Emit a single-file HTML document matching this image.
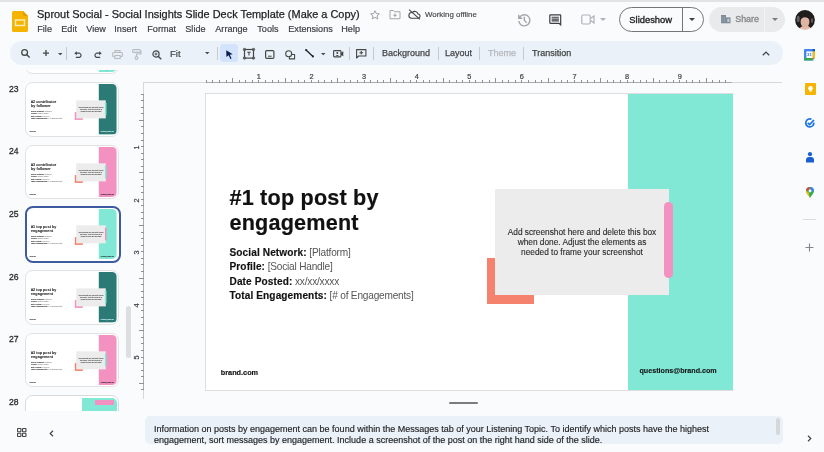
<!DOCTYPE html>
<html><head><meta charset="utf-8">
<style>
*{margin:0;padding:0;box-sizing:border-box}
html,body{width:824px;height:452px;overflow:hidden;background:#f9fbfd;font-family:"Liberation Sans",sans-serif;position:relative}
.a{position:absolute}
.t{position:absolute;white-space:nowrap;line-height:1}
svg{position:absolute;overflow:visible}
</style></head><body><div id="root" style="position:absolute;left:0;top:0;width:824px;height:452px;will-change:transform">
<!-- top strip -->
<div class="a" style="left:0;top:0;width:824px;height:2px;background:#e2e3e5"></div>

<!-- slides logo -->
<svg style="left:12px;top:11px" width="16" height="21" viewBox="0 0 16 21">
  <path d="M1.5 0H11L16 5V19.5A1.5 1.5 0 0 1 14.5 21H1.5A1.5 1.5 0 0 1 0 19.5V1.5A1.5 1.5 0 0 1 1.5 0Z" fill="#f4b400"/>
  <path d="M11 0L16 5H12A1 1 0 0 1 11 4Z" fill="#e39e00"/>
  <rect x="3.5" y="9" width="9" height="5.5" fill="none" stroke="#fdf0c0" stroke-width="1.4"/>
</svg>

<div class="t" style="left:37px;top:9.1px;font-size:10.95px;color:#1f1f1f;-webkit-text-stroke:0.25px #1f1f1f">Sprout Social - Social Insights Slide Deck Template (Make a Copy)</div>

<div id="menu" class="t" style="left:37.3px;top:25.1px;font-size:9.1px;color:#3c3f41;-webkit-text-stroke:0.2px #3c3f41">
<span class="a" style="left:0">File</span><span class="a" style="left:24px">Edit</span><span class="a" style="left:49px">View</span><span class="a" style="left:77px">Insert</span><span class="a" style="left:110px">Format</span><span class="a" style="left:148px">Slide</span><span class="a" style="left:178px">Arrange</span><span class="a" style="left:220px">Tools</span><span class="a" style="left:251px">Extensions</span><span class="a" style="left:304px">Help</span>
</div>

<!-- star, folder, cloud -->
<svg style="left:369px;top:9px" width="12" height="12" viewBox="0 0 24 24"><path d="M12 3.5l2.6 5.6 6.1.6-4.6 4.1 1.3 6-5.4-3.1-5.4 3.1 1.3-6-4.6-4.1 6.1-.6z" fill="none" stroke="#8a8c8e" stroke-width="1.6" stroke-linejoin="round"/></svg>
<svg style="left:389px;top:9px" width="12" height="11" viewBox="0 0 24 22"><path d="M2 3h7l2 2.5h11v14H2z" fill="none" stroke="#9a9c9e" stroke-width="1.8"/><path d="M12 9v7M8.5 12.5h7" stroke="#9a9c9e" stroke-width="1.8"/></svg>
<svg style="left:408px;top:9px" width="13" height="11" viewBox="0 0 24 20"><path d="M6 17h12a4 4 0 0 0 .5-8A6 6 0 0 0 8 6.5 5 5 0 0 0 6 17z" fill="none" stroke="#444" stroke-width="2"/><path d="M2 1l20 18" stroke="#444" stroke-width="2"/></svg>
<div class="t" style="left:425px;top:11px;font-size:7.9px;color:#444746;-webkit-text-stroke:0.15px #444746">Working offline</div>

<!-- history -->
<svg style="left:516px;top:11.5px" width="16.6" height="16.6" viewBox="0 -960 960 960"><path d="M480-120q-138 0-240.5-91.5T122-440h82q14 104 92.5 172T480-200q117 0 198.5-81.5T760-480q0-117-81.5-198.5T480-760q-69 0-129 32t-101 88h110v80H120v-240h80v94q51-64 124.5-99T480-840q75 0 140.5 28.5t114 77q48.5 48.5 77 114T840-480q0 75-28.5 140.5t-77 114q-48.5 48.5-114 77T480-120Zm112-192L440-464v-216h80v184l128 128-56 56Z" fill="#a4a7aa"/></svg>
<!-- comment -->
<svg style="left:547.5px;top:12.7px" width="14.5" height="14.5" viewBox="0 -960 960 960"><path d="M240-400h480v-80H240v80Zm0-120h480v-80H240v80Zm0-120h480v-80H240v80ZM880-80 720-240H160q-33 0-56.5-23.5T80-320v-480q0-33 23.5-56.5T160-880h640q33 0 56.5 23.5T880-800v720ZM160-320h594l46 45v-525H160v480Zm0 0v-480 480Z" fill="#3c4043"/></svg>
<!-- camera -->
<svg style="left:581px;top:14px" width="14" height="11" viewBox="0 0 28 22"><rect x="1.5" y="2" width="17" height="18" rx="3" fill="none" stroke="#b0b3b6" stroke-width="2.4"/><path d="M19 9l7-5v14l-7-5" fill="none" stroke="#b0b3b6" stroke-width="2.4"/></svg>
<svg style="left:600px;top:18px" width="6" height="3" viewBox="0 0 6 3"><path d="M0 0h6L3 3z" fill="#b0b3b6"/></svg>

<!-- slideshow btn -->
<div class="a" style="left:619px;top:7px;width:85px;height:25px;border:1px solid #747775;border-radius:13px"></div>
<div class="a" style="left:682px;top:8px;width:1px;height:23px;background:#747775"></div>
<div class="t" style="left:629.3px;top:14.74px;font-size:9.4px;color:#1f1f1f;-webkit-text-stroke:0.35px #1f1f1f">Slideshow</div>
<svg style="left:689px;top:18px" width="6" height="3" viewBox="0 0 6 3"><path d="M0 0h6L3 3z" fill="#3c4043"/></svg>

<!-- share btn -->
<div class="a" style="left:709px;top:7px;width:76px;height:25px;background:#e9eaeb;border-radius:13px"></div>
<div class="a" style="left:764px;top:7px;width:1px;height:25px;background:#f2f3f4"></div>
<svg style="left:720.5px;top:15px" width="9.5" height="8.3" viewBox="0 0 9.5 8.3"><rect x="0" y="0" width="5" height="8.3" fill="#7d8b98"/><rect x="5" y="2.4" width="4.5" height="5.9" fill="#7d8b98"/><rect x="6.3" y="3.8" width="2" height="3.2" fill="#c5ccd2"/><path d="M1.2 1.5v5.5M3.4 1.5v5.5" stroke="#a5b0ba" stroke-width="0.6"/></svg>
<div class="t" style="left:735.2px;top:14.7px;font-size:8.95px;color:#858789;-webkit-text-stroke:0.3px #858789">Share</div>
<svg style="left:772px;top:18px" width="6" height="3" viewBox="0 0 6 3"><path d="M0 0h6L3 3z" fill="#7a7c7e"/></svg>

<!-- avatar -->
<svg style="left:795.2px;top:9.5px" width="20" height="20" viewBox="0 0 20 20">
<defs><clipPath id="av"><circle cx="10" cy="10" r="9.9"/></clipPath><filter id="avb" x="-10%" y="-10%" width="120%" height="120%"><feGaussianBlur stdDeviation="0.5"/></filter></defs>
<g clip-path="url(#av)"><g filter="url(#avb)">
<rect width="20" height="20" fill="#211d1d"/>
<ellipse cx="3.2" cy="9" rx="1.5" ry="3.2" fill="#5d6166"/>
<ellipse cx="17" cy="10.5" rx="1.2" ry="2.6" fill="#55585b"/>
<path d="M3 22Q4.5 15.5 10.5 15.5Q16 15.5 17.5 22z" fill="#e6bcaa"/>
<ellipse cx="10" cy="11.8" rx="4.4" ry="6" fill="#e0b4a3"/>
<path d="M5.3 9.5Q5.8 4.2 10.8 4.4Q15.2 5 15.1 10Q12.5 6.5 8.2 7.6z" fill="#211d1d"/>
</g></g></svg>

<!-- toolbar pill -->
<div class="a" style="left:9.5px;top:41px;width:773px;height:24.3px;background:#ebf1f9;border-radius:12.2px"></div>

<!-- search -->
<svg style="left:20px;top:48px" width="11" height="11" viewBox="0 0 11 11"><circle cx="4.6" cy="4.4" r="2.85" fill="none" stroke="#444746" stroke-width="1.3"/><path d="M6.6 6.5L9.6 9.5" stroke="#444746" stroke-width="1.4"/></svg>
<!-- plus -->
<svg style="left:42px;top:49px" width="8" height="8" viewBox="0 0 8 8"><path d="M4 1.1V7.1M1 4.1H7" stroke="#444746" stroke-width="1.3"/></svg>
<svg style="left:57.5px;top:52.5px" width="4.5" height="2.3" viewBox="0 0 6 3"><path d="M0 0h6L3 3z" fill="#444746"/></svg>
<div class="a" style="left:65.5px;top:47px;width:1px;height:12.5px;background:#c7c9cc"></div>
<!-- undo -->
<svg style="left:74px;top:51px" width="9" height="7" viewBox="0 0 9 7"><path d="M2 2.2H5.5A2.2 2.2 0 0 1 5.5 6.4H1.8" fill="none" stroke="#444746" stroke-width="1.2"/><path d="M0.3 2.2L2.8 0.2V4.2z" fill="#444746"/></svg>
<!-- redo -->
<svg style="left:92.8px;top:51px" width="9" height="7" viewBox="0 0 9 7"><path d="M7 2.2H3.5A2.2 2.2 0 0 0 3.5 6.4H7.2" fill="none" stroke="#444746" stroke-width="1.2"/><path d="M8.7 2.2L6.2 0.2V4.2z" fill="#444746"/></svg>
<!-- print -->
<svg style="left:112px;top:50px" width="11" height="9" viewBox="0 0 11 9"><path d="M3 2.3V0.6h5v1.7" fill="none" stroke="#b9bcbf" stroke-width="1.1"/><rect x="0.6" y="2.5" width="9.8" height="4" rx="1" fill="none" stroke="#b9bcbf" stroke-width="1.1"/><rect x="2.8" y="5.5" width="5.4" height="3" fill="#ebf1f9" stroke="#b9bcbf" stroke-width="1.1"/></svg>
<!-- paint -->
<svg style="left:132px;top:49px" width="9" height="11" viewBox="0 0 9 11"><rect x="0.6" y="0.6" width="7.8" height="2.8" rx="1" fill="none" stroke="#b9bcbf" stroke-width="1.1"/><path d="M8.4 2H9V5H4.5V7.5" fill="none" stroke="#b9bcbf" stroke-width="1.1"/><circle cx="4.5" cy="9" r="1.4" fill="none" stroke="#b9bcbf" stroke-width="1.1"/></svg>
<!-- zoom -->
<svg style="left:151.5px;top:49.5px" width="10" height="10" viewBox="0 0 10 10"><circle cx="4" cy="4" r="3.1" fill="none" stroke="#444746" stroke-width="1.2"/><path d="M4 2.6V5.4M2.6 4H5.4" stroke="#444746" stroke-width="0.9"/><path d="M6.2 6.2L9.2 9.2" stroke="#444746" stroke-width="1.4"/></svg>
<div class="t" style="left:170px;top:48.5px;font-size:9.5px;color:#444746;-webkit-text-stroke:0.2px #444746">Fit</div>
<svg style="left:204.7px;top:52.2px" width="4.5" height="2.3" viewBox="0 0 6 3"><path d="M0 0h6L3 3z" fill="#444746"/></svg>
<div class="a" style="left:217.2px;top:47px;width:1px;height:12.5px;background:#c7c9cc"></div>
<!-- select -->
<div class="a" style="left:220.1px;top:44.2px;width:18px;height:18px;background:#d3e3fd;border-radius:3.5px"></div>
<svg style="left:225.8px;top:49.6px" width="7" height="9.5" viewBox="0 0 7 9.5"><path d="M0.3 0.3L6.7 4.2L3.8 4.7L5.6 8.4L4.4 9L2.6 5.3L0.4 7.1z" fill="#0b1d4a"/></svg>
<!-- textbox -->
<svg style="left:243.2px;top:48.2px" width="12" height="11.6" viewBox="0 0 12 11.6"><rect x="1.5" y="1.5" width="9" height="8.6" fill="none" stroke="#444746" stroke-width="1.2"/><circle cx="1.5" cy="1.5" r="1.25" fill="#5f6163" stroke="#444746" stroke-width="0.6"/><circle cx="10.5" cy="1.5" r="1.25" fill="#5f6163" stroke="#444746" stroke-width="0.6"/><circle cx="1.5" cy="10.1" r="1.25" fill="#5f6163" stroke="#444746" stroke-width="0.6"/><circle cx="10.5" cy="10.1" r="1.25" fill="#5f6163" stroke="#444746" stroke-width="0.6"/><path d="M4.3 4.2h3.4M6 4.2V7.6" stroke="#444746" stroke-width="1.1"/></svg>
<!-- image -->
<svg style="left:264.5px;top:49.7px" width="9.5" height="9" viewBox="0 0 9.5 9"><rect x="0.6" y="0.6" width="8.3" height="7.8" rx="1.2" fill="none" stroke="#444746" stroke-width="1.2"/><path d="M3 6.2h3.6" stroke="#444746" stroke-width="1"/></svg>
<!-- shape -->
<svg style="left:284.7px;top:49.5px" width="11" height="10" viewBox="0 0 11 10"><circle cx="3.7" cy="3.7" r="3" fill="none" stroke="#444746" stroke-width="1.1"/><path d="M6.4 4.5H9.6V8.9H4.4V6.9" fill="none" stroke="#444746" stroke-width="1.1" stroke-linejoin="round"/></svg>
<!-- line -->
<svg style="left:305.3px;top:49.3px" width="9" height="8.5" viewBox="0 0 9 8.5"><path d="M1.1 1.1L7.9 7.4" stroke="#1f1f1f" stroke-width="1.3"/><circle cx="1.1" cy="1.1" r="1.05" fill="#1f1f1f"/><circle cx="7.9" cy="7.4" r="1.05" fill="#1f1f1f"/></svg>
<svg style="left:321.2px;top:52.8px" width="4.5" height="2.3" viewBox="0 0 6 3"><path d="M0 0h6L3 3z" fill="#444746"/></svg>
<!-- video -->
<svg style="left:333px;top:50.2px" width="10.5" height="7.5" viewBox="0 0 10.5 7.5"><rect x="0.6" y="0.6" width="7.3" height="6.3" rx="0.8" fill="none" stroke="#444746" stroke-width="1.1"/><circle cx="4.3" cy="3" r="1" fill="#444746"/><path d="M2.6 6Q4.3 3.8 6 6" fill="#444746"/><path d="M8 2.5L10.3 1.2V6.3L8 5z" fill="#444746"/></svg>
<div class="a" style="left:349px;top:47px;width:1px;height:12.5px;background:#c7c9cc"></div>
<!-- comment add -->
<svg style="left:356px;top:49.2px" width="10.5" height="9.5" viewBox="0 0 10.5 9.5"><path d="M0.6 0.6H9.9V7H2.6L0.6 9z" fill="none" stroke="#444746" stroke-width="1.1" stroke-linejoin="round"/><path d="M5.25 2v3.6M3.45 3.8h3.6" stroke="#444746" stroke-width="1.1"/></svg>
<div class="a" style="left:373px;top:47px;width:1px;height:12.5px;background:#c7c9cc"></div>
<div class="t" style="left:382px;top:49px;font-size:9px;color:#444746;-webkit-text-stroke:0.25px #444746">Background</div>
<div class="a" style="left:438px;top:47px;width:1px;height:12.5px;background:#c7c9cc"></div>
<div class="t" style="left:445px;top:49px;font-size:9px;color:#444746;-webkit-text-stroke:0.25px #444746">Layout</div>
<div class="a" style="left:478.8px;top:47px;width:1px;height:12.5px;background:#c7c9cc"></div>
<div class="t" style="left:488px;top:49px;font-size:9px;color:#b4b7ba;-webkit-text-stroke:0.25px #b4b7ba">Theme</div>
<div class="a" style="left:522.8px;top:47px;width:1px;height:12.5px;background:#c7c9cc"></div>
<div class="t" style="left:532px;top:49px;font-size:9px;color:#444746;-webkit-text-stroke:0.25px #444746">Transition</div>
<!-- chevron -->
<svg style="left:762px;top:51px" width="8" height="5" viewBox="0 0 8 5"><path d="M0.8 4.3L4 1.1L7.2 4.3" fill="none" stroke="#444746" stroke-width="1.3"/></svg>

<!-- right sidebar -->
<svg style="left:804.1px;top:48.9px" width="11" height="11.4" viewBox="0 0 11 11.4">
<rect x="0" y="0" width="11" height="11.4" rx="1" fill="#4285f4"/>
<rect x="8.6" y="0" width="2.4" height="2.4" fill="#1a56b8"/>
<rect x="0" y="9" width="8.6" height="2.4" fill="#34a853"/>
<rect x="8.6" y="2.4" width="2.4" height="6.6" fill="#fbbc04"/>
<path d="M8.6 9H11L8.6 11.4z" fill="#b79320"/>
<path d="M11 9V11.4H8.6z" fill="#f9fbfd"/>
<rect x="2.4" y="2.4" width="6.2" height="6.6" fill="#fff"/>
<text x="5.5" y="7.4" font-size="4.4" text-anchor="middle" fill="#3b6fc8" font-family="Liberation Sans" font-weight="bold">31</text>
</svg>
<svg style="left:804.5px;top:83px" width="11" height="12" viewBox="0 0 11 12"><rect width="11" height="12" rx="1" fill="#f4b400"/><circle cx="5.5" cy="5.2" r="2.3" fill="#fff"/><rect x="4.4" y="7" width="2.2" height="1.6" fill="#fff"/></svg>
<svg style="left:805px;top:118px" width="10" height="10" viewBox="0 0 10 10"><path d="M8.8 4.6A4 4 0 1 1 6.5 1.3" fill="none" stroke="#1a73e8" stroke-width="1.7"/><path d="M2.8 4.8L4.6 6.5L9 2" fill="none" stroke="#1a73e8" stroke-width="1.7"/></svg>
<svg style="left:805.5px;top:152px" width="8" height="10.5" viewBox="0 0 8 10.5"><circle cx="4" cy="2.2" r="2.1" fill="#1a5fd0"/><path d="M0 10.5V8A3 3 0 0 1 3 5h2a3 3 0 0 1 3 3v2.5z" fill="#1a5fd0"/></svg>
<svg style="left:805.5px;top:187px" width="8" height="11" viewBox="0 0 8 11"><path d="M4 0A4 4 0 0 1 8 4C8 6.5 5 8.5 4 11C3 8.5 0 6.5 0 4A4 4 0 0 1 4 0z" fill="#34a853"/><path d="M4 0A4 4 0 0 1 8 4L5.5 5z" fill="#4285f4"/><path d="M0 4A4 4 0 0 1 4 0L2.5 3z" fill="#ea4335"/><path d="M0 4L2.5 5 4 11C3 8.5 0 6.5 0 4z" fill="#fbbc04"/><circle cx="4" cy="4" r="1.4" fill="#fff"/></svg>
<div class="a" style="left:803px;top:218.5px;width:13px;height:1px;background:#dadce0"></div>
<svg style="left:805px;top:242.5px" width="9" height="9" viewBox="0 0 9 9"><path d="M4.5 0.5V8.5M0.5 4.5H8.5" stroke="#80868b" stroke-width="1.1"/></svg>




<!-- rulers -->
<div class="a" style="left:143.2px;top:82px;width:639px;height:1px;background:#d6d8da"></div>
<div class="a" style="left:206px;top:82px;width:526px;height:1px;background:#a9abad"></div>
<div class="a" style="left:143.2px;top:82px;width:1px;height:317px;background:#d6d8da"></div>
<div class="a" style="left:143.2px;top:94px;width:1px;height:296px;background:#a9abad"></div>

<div class="a" style="left:205.80px;top:80.00px;width:1px;height:2.5px;background:#8f9194"></div>
<div class="a" style="left:212.38px;top:80.00px;width:1px;height:2.5px;background:#8f9194"></div>
<div class="a" style="left:218.95px;top:80.00px;width:1px;height:2.5px;background:#8f9194"></div>
<div class="a" style="left:225.53px;top:80.00px;width:1px;height:2.5px;background:#8f9194"></div>
<div class="a" style="left:232.10px;top:77.50px;width:1px;height:5px;background:#8f9194"></div>
<div class="a" style="left:238.68px;top:80.00px;width:1px;height:2.5px;background:#8f9194"></div>
<div class="a" style="left:245.25px;top:80.00px;width:1px;height:2.5px;background:#8f9194"></div>
<div class="a" style="left:251.83px;top:80.00px;width:1px;height:2.5px;background:#8f9194"></div>
<div class="t" style="left:255.90px;top:72.6px;width:6px;text-align:center;font-size:7.4px;color:#3f4244;-webkit-text-stroke:0.2px #3f4244">1</div>
<div class="a" style="left:258.40px;top:80.00px;width:1px;height:2.5px;background:#8f9194"></div>
<div class="a" style="left:264.98px;top:80.00px;width:1px;height:2.5px;background:#8f9194"></div>
<div class="a" style="left:271.55px;top:80.00px;width:1px;height:2.5px;background:#8f9194"></div>
<div class="a" style="left:278.12px;top:80.00px;width:1px;height:2.5px;background:#8f9194"></div>
<div class="a" style="left:284.70px;top:77.50px;width:1px;height:5px;background:#8f9194"></div>
<div class="a" style="left:291.28px;top:80.00px;width:1px;height:2.5px;background:#8f9194"></div>
<div class="a" style="left:297.85px;top:80.00px;width:1px;height:2.5px;background:#8f9194"></div>
<div class="a" style="left:304.43px;top:80.00px;width:1px;height:2.5px;background:#8f9194"></div>
<div class="t" style="left:308.50px;top:72.6px;width:6px;text-align:center;font-size:7.4px;color:#3f4244;-webkit-text-stroke:0.2px #3f4244">2</div>
<div class="a" style="left:311.00px;top:80.00px;width:1px;height:2.5px;background:#8f9194"></div>
<div class="a" style="left:317.58px;top:80.00px;width:1px;height:2.5px;background:#8f9194"></div>
<div class="a" style="left:324.15px;top:80.00px;width:1px;height:2.5px;background:#8f9194"></div>
<div class="a" style="left:330.73px;top:80.00px;width:1px;height:2.5px;background:#8f9194"></div>
<div class="a" style="left:337.30px;top:77.50px;width:1px;height:5px;background:#8f9194"></div>
<div class="a" style="left:343.88px;top:80.00px;width:1px;height:2.5px;background:#8f9194"></div>
<div class="a" style="left:350.45px;top:80.00px;width:1px;height:2.5px;background:#8f9194"></div>
<div class="a" style="left:357.02px;top:80.00px;width:1px;height:2.5px;background:#8f9194"></div>
<div class="t" style="left:361.10px;top:72.6px;width:6px;text-align:center;font-size:7.4px;color:#3f4244;-webkit-text-stroke:0.2px #3f4244">3</div>
<div class="a" style="left:363.60px;top:80.00px;width:1px;height:2.5px;background:#8f9194"></div>
<div class="a" style="left:370.18px;top:80.00px;width:1px;height:2.5px;background:#8f9194"></div>
<div class="a" style="left:376.75px;top:80.00px;width:1px;height:2.5px;background:#8f9194"></div>
<div class="a" style="left:383.33px;top:80.00px;width:1px;height:2.5px;background:#8f9194"></div>
<div class="a" style="left:389.90px;top:77.50px;width:1px;height:5px;background:#8f9194"></div>
<div class="a" style="left:396.48px;top:80.00px;width:1px;height:2.5px;background:#8f9194"></div>
<div class="a" style="left:403.05px;top:80.00px;width:1px;height:2.5px;background:#8f9194"></div>
<div class="a" style="left:409.62px;top:80.00px;width:1px;height:2.5px;background:#8f9194"></div>
<div class="t" style="left:413.70px;top:72.6px;width:6px;text-align:center;font-size:7.4px;color:#3f4244;-webkit-text-stroke:0.2px #3f4244">4</div>
<div class="a" style="left:416.20px;top:80.00px;width:1px;height:2.5px;background:#8f9194"></div>
<div class="a" style="left:422.77px;top:80.00px;width:1px;height:2.5px;background:#8f9194"></div>
<div class="a" style="left:429.35px;top:80.00px;width:1px;height:2.5px;background:#8f9194"></div>
<div class="a" style="left:435.93px;top:80.00px;width:1px;height:2.5px;background:#8f9194"></div>
<div class="a" style="left:442.50px;top:77.50px;width:1px;height:5px;background:#8f9194"></div>
<div class="a" style="left:449.08px;top:80.00px;width:1px;height:2.5px;background:#8f9194"></div>
<div class="a" style="left:455.65px;top:80.00px;width:1px;height:2.5px;background:#8f9194"></div>
<div class="a" style="left:462.23px;top:80.00px;width:1px;height:2.5px;background:#8f9194"></div>
<div class="t" style="left:466.30px;top:72.6px;width:6px;text-align:center;font-size:7.4px;color:#3f4244;-webkit-text-stroke:0.2px #3f4244">5</div>
<div class="a" style="left:468.80px;top:80.00px;width:1px;height:2.5px;background:#8f9194"></div>
<div class="a" style="left:475.38px;top:80.00px;width:1px;height:2.5px;background:#8f9194"></div>
<div class="a" style="left:481.95px;top:80.00px;width:1px;height:2.5px;background:#8f9194"></div>
<div class="a" style="left:488.53px;top:80.00px;width:1px;height:2.5px;background:#8f9194"></div>
<div class="a" style="left:495.10px;top:77.50px;width:1px;height:5px;background:#8f9194"></div>
<div class="a" style="left:501.68px;top:80.00px;width:1px;height:2.5px;background:#8f9194"></div>
<div class="a" style="left:508.25px;top:80.00px;width:1px;height:2.5px;background:#8f9194"></div>
<div class="a" style="left:514.83px;top:80.00px;width:1px;height:2.5px;background:#8f9194"></div>
<div class="t" style="left:518.90px;top:72.6px;width:6px;text-align:center;font-size:7.4px;color:#3f4244;-webkit-text-stroke:0.2px #3f4244">6</div>
<div class="a" style="left:521.40px;top:80.00px;width:1px;height:2.5px;background:#8f9194"></div>
<div class="a" style="left:527.98px;top:80.00px;width:1px;height:2.5px;background:#8f9194"></div>
<div class="a" style="left:534.55px;top:80.00px;width:1px;height:2.5px;background:#8f9194"></div>
<div class="a" style="left:541.12px;top:80.00px;width:1px;height:2.5px;background:#8f9194"></div>
<div class="a" style="left:547.70px;top:77.50px;width:1px;height:5px;background:#8f9194"></div>
<div class="a" style="left:554.28px;top:80.00px;width:1px;height:2.5px;background:#8f9194"></div>
<div class="a" style="left:560.85px;top:80.00px;width:1px;height:2.5px;background:#8f9194"></div>
<div class="a" style="left:567.42px;top:80.00px;width:1px;height:2.5px;background:#8f9194"></div>
<div class="t" style="left:571.50px;top:72.6px;width:6px;text-align:center;font-size:7.4px;color:#3f4244;-webkit-text-stroke:0.2px #3f4244">7</div>
<div class="a" style="left:574.00px;top:80.00px;width:1px;height:2.5px;background:#8f9194"></div>
<div class="a" style="left:580.58px;top:80.00px;width:1px;height:2.5px;background:#8f9194"></div>
<div class="a" style="left:587.15px;top:80.00px;width:1px;height:2.5px;background:#8f9194"></div>
<div class="a" style="left:593.73px;top:80.00px;width:1px;height:2.5px;background:#8f9194"></div>
<div class="a" style="left:600.30px;top:77.50px;width:1px;height:5px;background:#8f9194"></div>
<div class="a" style="left:606.88px;top:80.00px;width:1px;height:2.5px;background:#8f9194"></div>
<div class="a" style="left:613.45px;top:80.00px;width:1px;height:2.5px;background:#8f9194"></div>
<div class="a" style="left:620.03px;top:80.00px;width:1px;height:2.5px;background:#8f9194"></div>
<div class="t" style="left:624.10px;top:72.6px;width:6px;text-align:center;font-size:7.4px;color:#3f4244;-webkit-text-stroke:0.2px #3f4244">8</div>
<div class="a" style="left:626.60px;top:80.00px;width:1px;height:2.5px;background:#8f9194"></div>
<div class="a" style="left:633.17px;top:80.00px;width:1px;height:2.5px;background:#8f9194"></div>
<div class="a" style="left:639.75px;top:80.00px;width:1px;height:2.5px;background:#8f9194"></div>
<div class="a" style="left:646.33px;top:80.00px;width:1px;height:2.5px;background:#8f9194"></div>
<div class="a" style="left:652.90px;top:77.50px;width:1px;height:5px;background:#8f9194"></div>
<div class="a" style="left:659.48px;top:80.00px;width:1px;height:2.5px;background:#8f9194"></div>
<div class="a" style="left:666.05px;top:80.00px;width:1px;height:2.5px;background:#8f9194"></div>
<div class="a" style="left:672.62px;top:80.00px;width:1px;height:2.5px;background:#8f9194"></div>
<div class="t" style="left:676.70px;top:72.6px;width:6px;text-align:center;font-size:7.4px;color:#3f4244;-webkit-text-stroke:0.2px #3f4244">9</div>
<div class="a" style="left:679.20px;top:80.00px;width:1px;height:2.5px;background:#8f9194"></div>
<div class="a" style="left:685.78px;top:80.00px;width:1px;height:2.5px;background:#8f9194"></div>
<div class="a" style="left:692.35px;top:80.00px;width:1px;height:2.5px;background:#8f9194"></div>
<div class="a" style="left:698.92px;top:80.00px;width:1px;height:2.5px;background:#8f9194"></div>
<div class="a" style="left:705.50px;top:77.50px;width:1px;height:5px;background:#8f9194"></div>
<div class="a" style="left:712.08px;top:80.00px;width:1px;height:2.5px;background:#8f9194"></div>
<div class="a" style="left:718.65px;top:80.00px;width:1px;height:2.5px;background:#8f9194"></div>
<div class="a" style="left:725.23px;top:80.00px;width:1px;height:2.5px;background:#8f9194"></div>
<div class="a" style="left:141.20px;top:93.50px;width:2.5px;height:1px;background:#8f9194"></div>
<div class="a" style="left:141.20px;top:100.08px;width:2.5px;height:1px;background:#8f9194"></div>
<div class="a" style="left:141.20px;top:106.65px;width:2.5px;height:1px;background:#8f9194"></div>
<div class="a" style="left:141.20px;top:113.22px;width:2.5px;height:1px;background:#8f9194"></div>
<div class="a" style="left:138.70px;top:119.80px;width:5px;height:1px;background:#8f9194"></div>
<div class="a" style="left:141.20px;top:126.38px;width:2.5px;height:1px;background:#8f9194"></div>
<div class="a" style="left:141.20px;top:132.95px;width:2.5px;height:1px;background:#8f9194"></div>
<div class="a" style="left:141.20px;top:139.53px;width:2.5px;height:1px;background:#8f9194"></div>
<div class="t" style="left:133.3px;top:144.00px;width:7px;height:7px;font-size:7.4px;color:#3f4244;-webkit-text-stroke:0.2px #3f4244;transform:rotate(-90deg);text-align:center">1</div>
<div class="a" style="left:141.20px;top:146.10px;width:2.5px;height:1px;background:#8f9194"></div>
<div class="a" style="left:141.20px;top:152.68px;width:2.5px;height:1px;background:#8f9194"></div>
<div class="a" style="left:141.20px;top:159.25px;width:2.5px;height:1px;background:#8f9194"></div>
<div class="a" style="left:141.20px;top:165.82px;width:2.5px;height:1px;background:#8f9194"></div>
<div class="a" style="left:138.70px;top:172.40px;width:5px;height:1px;background:#8f9194"></div>
<div class="a" style="left:141.20px;top:178.98px;width:2.5px;height:1px;background:#8f9194"></div>
<div class="a" style="left:141.20px;top:185.55px;width:2.5px;height:1px;background:#8f9194"></div>
<div class="a" style="left:141.20px;top:192.12px;width:2.5px;height:1px;background:#8f9194"></div>
<div class="t" style="left:133.3px;top:196.60px;width:7px;height:7px;font-size:7.4px;color:#3f4244;-webkit-text-stroke:0.2px #3f4244;transform:rotate(-90deg);text-align:center">2</div>
<div class="a" style="left:141.20px;top:198.70px;width:2.5px;height:1px;background:#8f9194"></div>
<div class="a" style="left:141.20px;top:205.28px;width:2.5px;height:1px;background:#8f9194"></div>
<div class="a" style="left:141.20px;top:211.85px;width:2.5px;height:1px;background:#8f9194"></div>
<div class="a" style="left:141.20px;top:218.43px;width:2.5px;height:1px;background:#8f9194"></div>
<div class="a" style="left:138.70px;top:225.00px;width:5px;height:1px;background:#8f9194"></div>
<div class="a" style="left:141.20px;top:231.58px;width:2.5px;height:1px;background:#8f9194"></div>
<div class="a" style="left:141.20px;top:238.15px;width:2.5px;height:1px;background:#8f9194"></div>
<div class="a" style="left:141.20px;top:244.72px;width:2.5px;height:1px;background:#8f9194"></div>
<div class="t" style="left:133.3px;top:249.20px;width:7px;height:7px;font-size:7.4px;color:#3f4244;-webkit-text-stroke:0.2px #3f4244;transform:rotate(-90deg);text-align:center">3</div>
<div class="a" style="left:141.20px;top:251.30px;width:2.5px;height:1px;background:#8f9194"></div>
<div class="a" style="left:141.20px;top:257.88px;width:2.5px;height:1px;background:#8f9194"></div>
<div class="a" style="left:141.20px;top:264.45px;width:2.5px;height:1px;background:#8f9194"></div>
<div class="a" style="left:141.20px;top:271.02px;width:2.5px;height:1px;background:#8f9194"></div>
<div class="a" style="left:138.70px;top:277.60px;width:5px;height:1px;background:#8f9194"></div>
<div class="a" style="left:141.20px;top:284.18px;width:2.5px;height:1px;background:#8f9194"></div>
<div class="a" style="left:141.20px;top:290.75px;width:2.5px;height:1px;background:#8f9194"></div>
<div class="a" style="left:141.20px;top:297.33px;width:2.5px;height:1px;background:#8f9194"></div>
<div class="t" style="left:133.3px;top:301.80px;width:7px;height:7px;font-size:7.4px;color:#3f4244;-webkit-text-stroke:0.2px #3f4244;transform:rotate(-90deg);text-align:center">4</div>
<div class="a" style="left:141.20px;top:303.90px;width:2.5px;height:1px;background:#8f9194"></div>
<div class="a" style="left:141.20px;top:310.48px;width:2.5px;height:1px;background:#8f9194"></div>
<div class="a" style="left:141.20px;top:317.05px;width:2.5px;height:1px;background:#8f9194"></div>
<div class="a" style="left:141.20px;top:323.62px;width:2.5px;height:1px;background:#8f9194"></div>
<div class="a" style="left:138.70px;top:330.20px;width:5px;height:1px;background:#8f9194"></div>
<div class="a" style="left:141.20px;top:336.77px;width:2.5px;height:1px;background:#8f9194"></div>
<div class="a" style="left:141.20px;top:343.35px;width:2.5px;height:1px;background:#8f9194"></div>
<div class="a" style="left:141.20px;top:349.93px;width:2.5px;height:1px;background:#8f9194"></div>
<div class="t" style="left:133.3px;top:354.40px;width:7px;height:7px;font-size:7.4px;color:#3f4244;-webkit-text-stroke:0.2px #3f4244;transform:rotate(-90deg);text-align:center">5</div>
<div class="a" style="left:141.20px;top:356.50px;width:2.5px;height:1px;background:#8f9194"></div>
<div class="a" style="left:141.20px;top:363.07px;width:2.5px;height:1px;background:#8f9194"></div>
<div class="a" style="left:141.20px;top:369.65px;width:2.5px;height:1px;background:#8f9194"></div>
<div class="a" style="left:141.20px;top:376.23px;width:2.5px;height:1px;background:#8f9194"></div>
<div class="a" style="left:138.70px;top:382.80px;width:5px;height:1px;background:#8f9194"></div>
<div class="a" style="left:141.20px;top:389.38px;width:2.5px;height:1px;background:#8f9194"></div>

<!-- slide -->
<div class="a" style="left:205px;top:93px;width:527.5px;height:1px;background:#dcdedf"></div>
<div class="a" style="left:205px;top:93px;width:1px;height:298px;background:#dcdedf"></div>
<div class="a" style="left:205px;top:390px;width:527.5px;height:1px;background:#dcdedf"></div>
<div class="a" style="left:206px;top:94px;width:526.5px;height:296px;overflow:hidden"><div class="a" style="left:0;top:-1px">
<div style="width:526.5px;height:297.3px;position:absolute;left:0;top:0;background:#fff;overflow:hidden">
<div class="a" style="left:422px;top:0;width:106px;height:298px;background:#80e8d5"></div>
<div class="a" style="left:281px;top:165px;width:47px;height:46px;background:#f4826c"></div>
<div class="a" style="left:289px;top:95.6px;width:174px;height:106.5px;background:#ececec"></div>
<div class="a" style="left:458.2px;top:108.6px;width:9.2px;height:76.2px;background:#f391c1;border-radius:4.6px"></div>
<div class="t" style="left:376px;top:135.2px;width:0;font-size:8.3px;color:#2a2a2a;-webkit-text-stroke:0.12px #2a2a2a"><div style="position:absolute;left:-85px;width:170px;text-align:center;line-height:9.85px">Add screenshot here and delete this box<br>when done. Adjust the elements as<br>needed to frame your screenshot</div></div>
<div class="t" style="left:23.5px;top:91.9px;font-size:21.6px;font-weight:bold;color:#111;line-height:25px;letter-spacing:0.2px;-webkit-text-stroke:0.2px #111">#1 top post by<br>engagement</div>
<div class="t" style="left:23.5px;top:153.3px;font-size:10.1px;color:#555;line-height:14.15px;letter-spacing:-0.2px"><b style="color:#111;letter-spacing:0.1px;-webkit-text-stroke:0.15px #111">Social Network:</b> [Platform]<br><b style="color:#111;letter-spacing:0.1px;-webkit-text-stroke:0.15px #111">Profile:</b> [Social Handle]<br><b style="color:#111;letter-spacing:0.1px;-webkit-text-stroke:0.15px #111">Date Posted:</b> xx/xx/xxxx<br><b style="color:#111;letter-spacing:0.1px;-webkit-text-stroke:0.15px #111">Total Engagements:</b> [# of Engagements]</div>
<div class="t" style="left:14.8px;top:276.4px;font-size:7.3px;font-weight:bold;color:#111;-webkit-text-stroke:0.15px #111">brand.com</div>
<div class="t" style="left:433.5px;top:274.9px;font-size:7.15px;font-weight:bold;color:#111;-webkit-text-stroke:0.1px #111">questions@brand.com</div>
</div></div>
</div>

<!-- drag handle -->
<div class="a" style="left:449px;top:402px;width:29px;height:2px;background:#7a7c7e;border-radius:1px"></div>

<!-- notes -->
<div class="a" style="left:144.5px;top:416.4px;width:638px;height:27.9px;background:#ebf1f9;border-radius:5px"></div>
<div class="a" style="left:775.7px;top:418.4px;width:4.6px;height:16.7px;background:#d5d7d9;border-radius:2.3px"></div>
<div class="t" style="left:154px;top:423.8px;font-size:9px;color:#1f1f1f;line-height:11.1px;-webkit-text-stroke:0.15px #1f1f1f">Information on posts by engagement can be found within the Messages tab of your Listening Topic. To identify which posts have the highest<br>engagement, sort messages by engagement. Include a screenshot of the post on the right hand side of the slide.</div>
<svg style="left:806.5px;top:434.5px" width="5" height="7" viewBox="0 0 5 7"><path d="M1 0.8L3.8 3.5L1 6.2" fill="none" stroke="#444746" stroke-width="1.2"/></svg>

<!-- bottom left -->
<svg style="left:16.8px;top:428.3px" width="9.5" height="9" viewBox="0 0 9.5 9"><rect x="0.55" y="0.55" width="3.4" height="3.2" rx="0.4" fill="none" stroke="#444746" stroke-width="1.1"/><rect x="5.55" y="0.55" width="3.4" height="3.2" rx="0.4" fill="none" stroke="#444746" stroke-width="1.1"/><rect x="0.55" y="5.25" width="3.4" height="3.2" rx="0.4" fill="none" stroke="#444746" stroke-width="1.1"/><rect x="5.55" y="5.25" width="3.4" height="3.2" rx="0.4" fill="none" stroke="#444746" stroke-width="1.1"/></svg>
<svg style="left:48.5px;top:429.5px" width="5" height="7" viewBox="0 0 5 7"><path d="M4 0.8L1.2 3.5L4 6.2" fill="none" stroke="#444746" stroke-width="1.2"/></svg>

<!-- filmstrip scrollbar -->
<div class="a" style="left:126px;top:306px;width:5.3px;height:52px;background:#dcdee0;border-radius:2.6px"></div>

<div class="a" style="left:0;top:70px;width:124px;height:340.8px;overflow:hidden">
<div class="a" style="left:24.8px;top:-50.50px;width:94.5px;height:54.7px;border:1px solid #dfe1e3;border-radius:7.5px;background:#fff;overflow:hidden">
<div class="a" style="left:1.5px;top:1.3px;width:89.5px;height:50.4px;border-radius:5px;overflow:hidden"><div style="position:absolute;left:0;top:0;transform:scale(0.17015);transform-origin:0 0"><div style="width:526.5px;height:297.3px;position:absolute;left:0;top:0;background:#fff;overflow:hidden">
<div class="a" style="left:422px;top:0;width:106px;height:298px;background:#80e8d5"></div>
<div class="a" style="left:281px;top:165px;width:47px;height:46px;background:#f4826c"></div>
<div class="a" style="left:289px;top:95.6px;width:174px;height:106.5px;background:#ececec"></div>
<div class="a" style="left:458.2px;top:108.6px;width:9.2px;height:76.2px;background:#f391c1;border-radius:4.6px"></div>
<div class="t" style="left:376px;top:135.2px;width:0;font-size:8.3px;color:#2a2a2a;-webkit-text-stroke:0.12px #2a2a2a"><div style="position:absolute;left:-85px;width:170px;text-align:center;line-height:9.85px">Add screenshot here and delete this box<br>when done. Adjust the elements as<br>needed to frame your screenshot</div></div>
<div class="t" style="left:23.5px;top:91.9px;font-size:21.6px;font-weight:bold;color:#111;line-height:25px;letter-spacing:0.2px;-webkit-text-stroke:0.2px #111">#2 contributor<br>by follower</div>
<div class="t" style="left:23.5px;top:153.3px;font-size:10.1px;color:#555;line-height:14.15px;letter-spacing:-0.2px"><b style="color:#111;letter-spacing:0.1px;-webkit-text-stroke:0.15px #111">Social Network:</b> [Platform]<br><b style="color:#111;letter-spacing:0.1px;-webkit-text-stroke:0.15px #111">Profile:</b> [Social Handle]<br><b style="color:#111;letter-spacing:0.1px;-webkit-text-stroke:0.15px #111">Date Posted:</b> xx/xx/xxxx<br><b style="color:#111;letter-spacing:0.1px;-webkit-text-stroke:0.15px #111">Total Engagements:</b> [# of Engagements]</div>
<div class="t" style="left:14.8px;top:276.4px;font-size:7.3px;font-weight:bold;color:#111;-webkit-text-stroke:0.15px #111">brand.com</div>
<div class="t" style="left:433.5px;top:274.9px;font-size:7.15px;font-weight:bold;color:#111;-webkit-text-stroke:0.1px #111">questions@brand.com</div>
</div></div></div></div>
<div class="a" style="left:24.8px;top:12.00px;width:94.5px;height:54.7px;border:1px solid #dfe1e3;border-radius:7.5px;background:#fff;overflow:hidden">
<div class="a" style="left:1.5px;top:1.3px;width:89.5px;height:50.4px;border-radius:5px;overflow:hidden"><div style="position:absolute;left:0;top:0;transform:scale(0.17015);transform-origin:0 0"><div style="width:526.5px;height:297.3px;position:absolute;left:0;top:0;background:#fff;overflow:hidden">
<div class="a" style="left:422px;top:0;width:106px;height:298px;background:#2c7a76"></div>
<div class="a" style="left:281px;top:165px;width:47px;height:46px;background:#f391c1"></div>
<div class="a" style="left:289px;top:95.6px;width:174px;height:106.5px;background:#ececec"></div>
<div class="a" style="left:458.2px;top:108.6px;width:9.2px;height:76.2px;background:#80e8d5;border-radius:4.6px"></div>
<div class="t" style="left:376px;top:135.2px;width:0;font-size:8.3px;color:#2a2a2a;-webkit-text-stroke:0.12px #2a2a2a"><div style="position:absolute;left:-85px;width:170px;text-align:center;line-height:9.85px">Add screenshot here and delete this box<br>when done. Adjust the elements as<br>needed to frame your screenshot</div></div>
<div class="t" style="left:23.5px;top:91.9px;font-size:21.6px;font-weight:bold;color:#111;line-height:25px;letter-spacing:0.2px;-webkit-text-stroke:0.2px #111">#2 contributor<br>by follower</div>
<div class="t" style="left:23.5px;top:153.3px;font-size:10.1px;color:#555;line-height:14.15px;letter-spacing:-0.2px"><b style="color:#111;letter-spacing:0.1px;-webkit-text-stroke:0.15px #111">Social Network:</b> [Platform]<br><b style="color:#111;letter-spacing:0.1px;-webkit-text-stroke:0.15px #111">Profile:</b> [Social Handle]<br><b style="color:#111;letter-spacing:0.1px;-webkit-text-stroke:0.15px #111">Date Posted:</b> xx/xx/xxxx<br><b style="color:#111;letter-spacing:0.1px;-webkit-text-stroke:0.15px #111">Total Engagements:</b> [# of Engagements]</div>
<div class="t" style="left:14.8px;top:276.4px;font-size:7.3px;font-weight:bold;color:#111;-webkit-text-stroke:0.15px #111">brand.com</div>
<div class="t" style="left:433.5px;top:274.9px;font-size:7.15px;font-weight:bold;color:#dff;-webkit-text-stroke:0.1px #dff">questions@brand.com</div>
</div></div></div></div>
<div class="t" style="left:9.0px;top:13.80px;font-size:9.9px;transform:scaleX(0.87);transform-origin:0 0;color:#2a2a2a;-webkit-text-stroke:0.3px #2a2a2a">23</div>
<div class="a" style="left:24.8px;top:74.60px;width:94.5px;height:54.7px;border:1px solid #dfe1e3;border-radius:7.5px;background:#fff;overflow:hidden">
<div class="a" style="left:1.5px;top:1.3px;width:89.5px;height:50.4px;border-radius:5px;overflow:hidden"><div style="position:absolute;left:0;top:0;transform:scale(0.17015);transform-origin:0 0"><div style="width:526.5px;height:297.3px;position:absolute;left:0;top:0;background:#fff;overflow:hidden">
<div class="a" style="left:422px;top:0;width:106px;height:298px;background:#f391c1"></div>
<div class="a" style="left:281px;top:165px;width:47px;height:46px;background:#f4826c"></div>
<div class="a" style="left:289px;top:95.6px;width:174px;height:106.5px;background:#ececec"></div>
<div class="a" style="left:458.2px;top:108.6px;width:9.2px;height:76.2px;background:#80e8d5;border-radius:4.6px"></div>
<div class="t" style="left:376px;top:135.2px;width:0;font-size:8.3px;color:#2a2a2a;-webkit-text-stroke:0.12px #2a2a2a"><div style="position:absolute;left:-85px;width:170px;text-align:center;line-height:9.85px">Add screenshot here and delete this box<br>when done. Adjust the elements as<br>needed to frame your screenshot</div></div>
<div class="t" style="left:23.5px;top:91.9px;font-size:21.6px;font-weight:bold;color:#111;line-height:25px;letter-spacing:0.2px;-webkit-text-stroke:0.2px #111">#3 contributor<br>by follower</div>
<div class="t" style="left:23.5px;top:153.3px;font-size:10.1px;color:#555;line-height:14.15px;letter-spacing:-0.2px"><b style="color:#111;letter-spacing:0.1px;-webkit-text-stroke:0.15px #111">Social Network:</b> [Platform]<br><b style="color:#111;letter-spacing:0.1px;-webkit-text-stroke:0.15px #111">Profile:</b> [Social Handle]<br><b style="color:#111;letter-spacing:0.1px;-webkit-text-stroke:0.15px #111">Date Posted:</b> xx/xx/xxxx<br><b style="color:#111;letter-spacing:0.1px;-webkit-text-stroke:0.15px #111">Total Engagements:</b> [# of Engagements]</div>
<div class="t" style="left:14.8px;top:276.4px;font-size:7.3px;font-weight:bold;color:#111;-webkit-text-stroke:0.15px #111">brand.com</div>
<div class="t" style="left:433.5px;top:274.9px;font-size:7.15px;font-weight:bold;color:#111;-webkit-text-stroke:0.1px #111">questions@brand.com</div>
</div></div></div></div>
<div class="t" style="left:9.0px;top:76.40px;font-size:9.9px;transform:scaleX(0.87);transform-origin:0 0;color:#2a2a2a;-webkit-text-stroke:0.3px #2a2a2a">24</div>
<div class="a" style="left:24.5px;top:135.90px;width:96px;height:57.4px;border:2px solid #3d5c9f;border-radius:8px;background:#fff;overflow:hidden">
<div class="a" style="left:0.8px;top:0.8px;width:89.5px;height:50.4px;border-radius:5px;overflow:hidden"><div style="position:absolute;left:0;top:0;transform:scale(0.17015);transform-origin:0 0"><div style="width:526.5px;height:297.3px;position:absolute;left:0;top:0;background:#fff;overflow:hidden">
<div class="a" style="left:422px;top:0;width:106px;height:298px;background:#80e8d5"></div>
<div class="a" style="left:281px;top:165px;width:47px;height:46px;background:#f4826c"></div>
<div class="a" style="left:289px;top:95.6px;width:174px;height:106.5px;background:#ececec"></div>
<div class="a" style="left:458.2px;top:108.6px;width:9.2px;height:76.2px;background:#f391c1;border-radius:4.6px"></div>
<div class="t" style="left:376px;top:135.2px;width:0;font-size:8.3px;color:#2a2a2a;-webkit-text-stroke:0.12px #2a2a2a"><div style="position:absolute;left:-85px;width:170px;text-align:center;line-height:9.85px">Add screenshot here and delete this box<br>when done. Adjust the elements as<br>needed to frame your screenshot</div></div>
<div class="t" style="left:23.5px;top:91.9px;font-size:21.6px;font-weight:bold;color:#111;line-height:25px;letter-spacing:0.2px;-webkit-text-stroke:0.2px #111">#1 top post by<br>engagement</div>
<div class="t" style="left:23.5px;top:153.3px;font-size:10.1px;color:#555;line-height:14.15px;letter-spacing:-0.2px"><b style="color:#111;letter-spacing:0.1px;-webkit-text-stroke:0.15px #111">Social Network:</b> [Platform]<br><b style="color:#111;letter-spacing:0.1px;-webkit-text-stroke:0.15px #111">Profile:</b> [Social Handle]<br><b style="color:#111;letter-spacing:0.1px;-webkit-text-stroke:0.15px #111">Date Posted:</b> xx/xx/xxxx<br><b style="color:#111;letter-spacing:0.1px;-webkit-text-stroke:0.15px #111">Total Engagements:</b> [# of Engagements]</div>
<div class="t" style="left:14.8px;top:276.4px;font-size:7.3px;font-weight:bold;color:#111;-webkit-text-stroke:0.15px #111">brand.com</div>
<div class="t" style="left:433.5px;top:274.9px;font-size:7.15px;font-weight:bold;color:#111;-webkit-text-stroke:0.1px #111">questions@brand.com</div>
</div></div></div></div>
<div class="t" style="left:9.0px;top:139.10px;font-size:9.9px;transform:scaleX(0.87);transform-origin:0 0;color:#2a2a2a;-webkit-text-stroke:0.3px #2a2a2a">25</div>
<div class="a" style="left:24.8px;top:199.90px;width:94.5px;height:54.7px;border:1px solid #dfe1e3;border-radius:7.5px;background:#fff;overflow:hidden">
<div class="a" style="left:1.5px;top:1.3px;width:89.5px;height:50.4px;border-radius:5px;overflow:hidden"><div style="position:absolute;left:0;top:0;transform:scale(0.17015);transform-origin:0 0"><div style="width:526.5px;height:297.3px;position:absolute;left:0;top:0;background:#fff;overflow:hidden">
<div class="a" style="left:422px;top:0;width:106px;height:298px;background:#2c7a76"></div>
<div class="a" style="left:281px;top:165px;width:47px;height:46px;background:#f391c1"></div>
<div class="a" style="left:289px;top:95.6px;width:174px;height:106.5px;background:#ececec"></div>
<div class="a" style="left:458.2px;top:108.6px;width:9.2px;height:76.2px;background:#80e8d5;border-radius:4.6px"></div>
<div class="t" style="left:376px;top:135.2px;width:0;font-size:8.3px;color:#2a2a2a;-webkit-text-stroke:0.12px #2a2a2a"><div style="position:absolute;left:-85px;width:170px;text-align:center;line-height:9.85px">Add screenshot here and delete this box<br>when done. Adjust the elements as<br>needed to frame your screenshot</div></div>
<div class="t" style="left:23.5px;top:91.9px;font-size:21.6px;font-weight:bold;color:#111;line-height:25px;letter-spacing:0.2px;-webkit-text-stroke:0.2px #111">#2 top post by<br>engagement</div>
<div class="t" style="left:23.5px;top:153.3px;font-size:10.1px;color:#555;line-height:14.15px;letter-spacing:-0.2px"><b style="color:#111;letter-spacing:0.1px;-webkit-text-stroke:0.15px #111">Social Network:</b> [Platform]<br><b style="color:#111;letter-spacing:0.1px;-webkit-text-stroke:0.15px #111">Profile:</b> [Social Handle]<br><b style="color:#111;letter-spacing:0.1px;-webkit-text-stroke:0.15px #111">Date Posted:</b> xx/xx/xxxx<br><b style="color:#111;letter-spacing:0.1px;-webkit-text-stroke:0.15px #111">Total Engagements:</b> [# of Engagements]</div>
<div class="t" style="left:14.8px;top:276.4px;font-size:7.3px;font-weight:bold;color:#111;-webkit-text-stroke:0.15px #111">brand.com</div>
<div class="t" style="left:433.5px;top:274.9px;font-size:7.15px;font-weight:bold;color:#dff;-webkit-text-stroke:0.1px #dff">questions@brand.com</div>
</div></div></div></div>
<div class="t" style="left:9.0px;top:201.70px;font-size:9.9px;transform:scaleX(0.87);transform-origin:0 0;color:#2a2a2a;-webkit-text-stroke:0.3px #2a2a2a">26</div>
<div class="a" style="left:24.8px;top:262.60px;width:94.5px;height:54.7px;border:1px solid #dfe1e3;border-radius:7.5px;background:#fff;overflow:hidden">
<div class="a" style="left:1.5px;top:1.3px;width:89.5px;height:50.4px;border-radius:5px;overflow:hidden"><div style="position:absolute;left:0;top:0;transform:scale(0.17015);transform-origin:0 0"><div style="width:526.5px;height:297.3px;position:absolute;left:0;top:0;background:#fff;overflow:hidden">
<div class="a" style="left:422px;top:0;width:106px;height:298px;background:#f391c1"></div>
<div class="a" style="left:281px;top:165px;width:47px;height:46px;background:#f4826c"></div>
<div class="a" style="left:289px;top:95.6px;width:174px;height:106.5px;background:#ececec"></div>
<div class="a" style="left:458.2px;top:108.6px;width:9.2px;height:76.2px;background:#80e8d5;border-radius:4.6px"></div>
<div class="t" style="left:376px;top:135.2px;width:0;font-size:8.3px;color:#2a2a2a;-webkit-text-stroke:0.12px #2a2a2a"><div style="position:absolute;left:-85px;width:170px;text-align:center;line-height:9.85px">Add screenshot here and delete this box<br>when done. Adjust the elements as<br>needed to frame your screenshot</div></div>
<div class="t" style="left:23.5px;top:91.9px;font-size:21.6px;font-weight:bold;color:#111;line-height:25px;letter-spacing:0.2px;-webkit-text-stroke:0.2px #111">#3 top post by<br>engagement</div>
<div class="t" style="left:23.5px;top:153.3px;font-size:10.1px;color:#555;line-height:14.15px;letter-spacing:-0.2px"><b style="color:#111;letter-spacing:0.1px;-webkit-text-stroke:0.15px #111">Social Network:</b> [Platform]<br><b style="color:#111;letter-spacing:0.1px;-webkit-text-stroke:0.15px #111">Profile:</b> [Social Handle]<br><b style="color:#111;letter-spacing:0.1px;-webkit-text-stroke:0.15px #111">Date Posted:</b> xx/xx/xxxx<br><b style="color:#111;letter-spacing:0.1px;-webkit-text-stroke:0.15px #111">Total Engagements:</b> [# of Engagements]</div>
<div class="t" style="left:14.8px;top:276.4px;font-size:7.3px;font-weight:bold;color:#111;-webkit-text-stroke:0.15px #111">brand.com</div>
<div class="t" style="left:433.5px;top:274.9px;font-size:7.15px;font-weight:bold;color:#111;-webkit-text-stroke:0.1px #111">questions@brand.com</div>
</div></div></div></div>
<div class="t" style="left:9.0px;top:264.40px;font-size:9.9px;transform:scaleX(0.87);transform-origin:0 0;color:#2a2a2a;-webkit-text-stroke:0.3px #2a2a2a">27</div>
<div class="a" style="left:24.8px;top:324.6px;width:94.5px;height:30px;border:1px solid #d8dadc;border-radius:7.5px;background:#fff;overflow:hidden"><div class="a" style="left:56.5px;top:2.2px;width:35px;height:30px;background:#80e8d5;border-radius:0 5px 0 0"></div><div class="a" style="left:69.5px;top:4.5px;width:19px;height:4.7px;background:#f391c1"></div></div>
<div class="t" style="left:9.0px;top:326.90px;font-size:9.9px;transform:scaleX(0.87);transform-origin:0 0;color:#2a2a2a;-webkit-text-stroke:0.3px #2a2a2a">28</div>
</div>
</div></body></html>
